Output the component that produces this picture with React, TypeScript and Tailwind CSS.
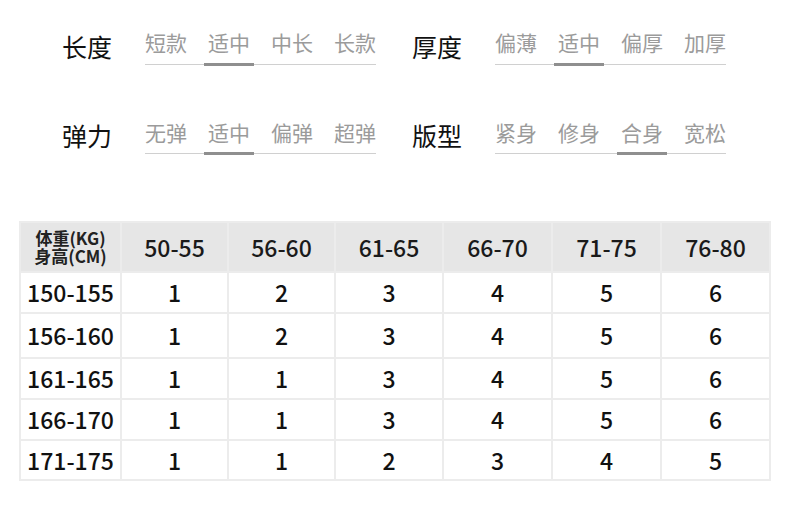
import React from "react";

const FONT = { fontFamily: '"Noto Sans CJK SC", "Noto Sans", sans-serif' };

type Group = { label: string; options: string[]; active: number };

function OptionGroup({ g, labelTop, barGap }: { g: Group; labelTop: string; barGap: string }) {
  return (
    <div className="flex items-start">
      <div className={`w-[83px] text-[25px] leading-[25px] text-[#111] ${labelTop}`}>{g.label}</div>
      <div className="w-[231px] flex flex-col">
        <div className="flex justify-between text-[21px] leading-[21px] text-[#9b9b9b]">
          {g.options.map((o, i) => (
            <span key={i} className="whitespace-nowrap">{o}</span>
          ))}
        </div>
        <div className={`relative h-[3px] ${barGap}`}>
          <div className="absolute left-0 right-0 top-[1px] h-px bg-[#d0d0d0]" />
          <div className="flex justify-between h-[3px]">
            {g.options.map((o, i) => (
              <div key={i} className="w-[42px] flex justify-center">
                <div className={i === g.active ? "w-[50px] shrink-0 h-[3px] bg-[#8f8f8f] relative" : "w-[50px] shrink-0 h-[3px]"} />
              </div>
            ))}
          </div>
        </div>
      </div>
    </div>
  );
}

const headers = ["50-55", "56-60", "61-65", "66-70", "71-75", "76-80"];
const rows: [string, number[], string][] = [
  ["150-155", [1, 2, 3, 4, 5, 6], "h-[41px]"],
  ["156-160", [1, 2, 3, 4, 5, 6], "h-[45px]"],
  ["161-165", [1, 1, 3, 4, 5, 6], "h-[41px]"],
  ["166-170", [1, 1, 3, 4, 5, 6], "h-[41px]"],
  ["171-175", [1, 1, 2, 3, 4, 5], "h-[40px]"],
];

export default function App() {
  const g1: Group = { label: "长度", options: ["短款", "适中", "中长", "长款"], active: 1 };
  const g2: Group = { label: "厚度", options: ["偏薄", "适中", "偏厚", "加厚"], active: 1 };
  const g3: Group = { label: "弹力", options: ["无弹", "适中", "偏弹", "超弹"], active: 1 };
  const g4: Group = { label: "版型", options: ["紧身", "修身", "合身", "宽松"], active: 2 };
  const cell = "flex items-center justify-center border-r-2 border-b-2 border-[#ececec]";
  return (
    <div className="w-[790px] h-[526px] bg-white overflow-hidden" style={FONT}>
      <div className="pt-[32px] pl-[62px]">
        <div className="flex gap-[36px] h-[90px]">
          <OptionGroup g={g1} labelTop="mt-[2px]" barGap="mt-[10px]" />
          <OptionGroup g={g2} labelTop="mt-[2px]" barGap="mt-[10px]" />
        </div>
        <div className="flex gap-[36px] h-[99px]">
          <OptionGroup g={g3} labelTop="mt-[1px]" barGap="mt-[9px]" />
          <OptionGroup g={g4} labelTop="mt-[1px]" barGap="mt-[9px]" />
        </div>
      </div>
      <div className="ml-[19px] w-[752px] border-l-2 border-t-2 border-[#ececec]">
        <div className="grid grid-cols-[101px_107px_107px_108px_109px_109px_109px] h-[50px] bg-[#e6e6e6]">
          <div className={`${cell} flex-col font-bold text-[17px] leading-[18px] text-[#222]`}>
            <span>体重(KG)</span>
            <span>身高(CM)</span>
          </div>
          {headers.map((h) => (
            <div key={h} className={`${cell} text-[23px] font-medium text-[#1a1a1a]`}>{h}</div>
          ))}
        </div>
        {rows.map(([h, vals, ht]) => (
          <div key={h} className={`grid grid-cols-[101px_107px_107px_108px_109px_109px_109px] ${ht}`}>
            <div className={`${cell} text-[23px] font-medium text-[#111]`}>{h}</div>
            {vals.map((v, i) => (
              <div key={i} className={`${cell} text-[23px] font-medium text-[#111]`}>{v}</div>
            ))}
          </div>
        ))}
      </div>
    </div>
  );
}
